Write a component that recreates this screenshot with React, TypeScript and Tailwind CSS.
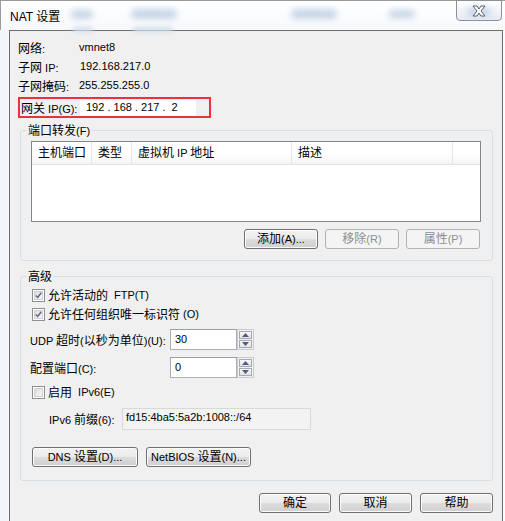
import React from 'react';

// Splits a label into CJK and Latin runs, Windows dialogs render CJK a touch larger
function Txt({ s }: { s: string }) {
  const parts = s.split(/([\u3400-\u9fff]+)/);
  return (
    <>
      {parts.map((p, i) =>
        p === '' ? null : /[\u3400-\u9fff]/.test(p) ? (
          <span key={i} className="text-[12px]">
            {p}
          </span>
        ) : (
          <span key={i} className="text-[11px] whitespace-pre">
            {p}
          </span>
        )
      )}
    </>
  );
}

function Button({ label, width, disabled }: { label: string; width: string; disabled?: boolean }) {
  return (
    <div
      className={`${width} h-[20px] flex items-center justify-center rounded-[3px] border ${
        disabled
          ? 'border-[#adb2b5] bg-[#f4f4f4] text-[#8d8d8d]'
          : 'border-[#707070] bg-[linear-gradient(#f2f2f2_0%,#ebebeb_50%,#dddddd_50%,#cfcfcf_100%)] shadow-[inset_0_0_0_1px_#fbfbfb] text-black'
      }`}
    >
      <Txt s={label} />
    </div>
  );
}

function Checkbox({ checked }: { checked?: boolean }) {
  return (
    <div className="w-[13px] h-[13px] border border-[#8e8f8f] bg-white p-[1px]">
      <div className="w-full h-full bg-[linear-gradient(135deg,#dcdcdc,#f7f7f7)] border border-[#d0d0d0] flex items-center justify-center">
        {checked && (
          <svg width="9" height="9" viewBox="0 0 9 9">
            <path d="M1 4.5 L3.5 7 L8 1" fill="none" stroke="#56648a" strokeWidth="1.8" />
          </svg>
        )}
      </div>
    </div>
  );
}

function Spinner() {
  return (
    <div className="w-[17px] h-[21px] flex flex-col gap-[1px] border border-[#c9cbd0] bg-[#f0f0f0] p-[1px]">
      {['up', 'down'].map((d) => (
        <div
          key={d}
          className="flex-1 flex items-center justify-center border border-[#a7a9ad] bg-[linear-gradient(#f7f7f7,#e3e3e3)]"
        >
          <svg width="7" height="4" viewBox="0 0 7 4">
            <path d={d === 'up' ? 'M0 4 L3.5 0 L7 4 Z' : 'M0 0 L3.5 4 L7 0 Z'} fill="#4c5c8c" />
          </svg>
        </div>
      ))}
    </div>
  );
}

function Group({ title, className, children }: { title: string; className: string; children: React.ReactNode }) {
  return (
    <div className={`relative ml-[2px] w-[473px] rounded-[3px] border border-[#d5dfe5] ${className}`}>
      <span className="absolute left-[6px] top-[-8px] bg-[#f0f0f0] px-[1px] leading-[14px]">
        <Txt s={title} />
      </span>
      {children}
    </div>
  );
}

export default function App() {
  const columns = [
    { name: '主机端口', w: 'w-[60px]' },
    { name: '类型', w: 'w-[40px]' },
    { name: '虚拟机 IP 地址', w: 'w-[160px]' },
    { name: '描述', w: 'w-[161px]' },
  ];

  return (
    <div className="relative w-[505px] h-[521px] overflow-hidden bg-[linear-gradient(90deg,#f3f6f9,#fbfcfd)] text-black leading-none font-['Liberation_Sans','Noto_Sans_CJK_SC',sans-serif]">
      {/* Title bar */}
      <div className="relative h-[30px] border-t border-l border-[#9b9b9b] bg-[linear-gradient(#ffffff,#f6f9fc)] flex items-center pl-[9px]">
        <div className="absolute left-[70px] top-[9px] w-[22px] h-[9px] rounded-full bg-[#c6d5e6] blur-[3px]" />
        <div className="absolute left-[130px] top-[8px] w-[46px] h-[10px] rounded-full bg-[#c6d5e6] blur-[3px]" />
        <div className="absolute left-[290px] top-[8px] w-[46px] h-[10px] rounded-full bg-[#c6d5e6] blur-[3px]" />
        <div className="absolute left-[388px] top-[9px] w-[26px] h-[8px] rounded-full bg-[#c6d5e6] blur-[3px]" />
        <div className="absolute left-[72px] top-[26px] w-[20px] h-[5px] rounded-full bg-[#d2dfec] blur-[2px]" />
        <div className="absolute left-[132px] top-[26px] w-[40px] h-[5px] rounded-full bg-[#d2dfec] blur-[2px]" />
        <span className="relative text-[12px] pt-[3px]">NAT 设置</span>
        <div className="absolute right-[3px] top-[-1px] w-[46px] h-[21px] rounded-b-[4px] border border-[#8c8f94] bg-[linear-gradient(#ffffff,#e3ebf3)] flex items-center justify-center">
          <div className="absolute left-[10px] top-[7px] w-[24px] h-[8px] rounded-full bg-[#c6d5e6] blur-[3px]" />
          <svg className="relative" width="16" height="12" viewBox="0 0 16 12">
            <path
              d="M2 1 L6 1 L8 4 L10 1 L14 1 L10 6 L14 11 L10 11 L8 8 L6 11 L2 11 L6 6 Z"
              fill="#ffffff"
              stroke="#5a5f66"
              strokeWidth="1"
              strokeLinejoin="round"
            />
          </svg>
        </div>
      </div>

      {/* Client area */}
      <div className="ml-[9px] w-[494px] h-[492px] border-l border-t border-r border-[#6e6e6e] bg-[#f0f0f0] pl-[8px] pt-[7px]">
        <div className="flex h-[19px] items-center">
          <span className="w-[61px]"><Txt s="网络:" /></span>
          <Txt s="vmnet8" />
        </div>
        <div className="flex h-[19px] items-center">
          <span className="w-[62px]"><Txt s="子网 IP:" /></span>
          <Txt s="192.168.217.0" />
        </div>
        <div className="flex h-[19px] items-center">
          <span className="w-[61px]"><Txt s="子网掩码:" /></span>
          <Txt s="255.255.255.0" />
        </div>

        {/* Gateway, highlighted */}
        <div className="mt-[2px] w-[193px] h-[21px] border-2 border-[#e8333b] flex items-center pl-[1px]">
          <span className="w-[59px]"><Txt s="网关 IP(G):" /></span>
          <div className="w-[116px] h-[16px] bg-white flex items-center pl-[6px]">
            <Txt s="192 . 168 . 217 .  2" />
          </div>
        </div>

        {/* Port forwarding */}
        <Group title="端口转发(F)" className="mt-[12px] h-[131px] pt-[10px] pl-[10px]">
          <div className="w-[450px] h-[81px] border border-[#828790] bg-white">
            <div className="flex h-[23px] border-b border-[#e5e5e5] bg-[linear-gradient(#ffffff_0%,#ffffff_55%,#f3f4f6_100%)]">
              {columns.map((c) => (
                <div key={c.name} className={`${c.w} flex items-center pl-[6px] border-r border-[#e3e5e8]`}>
                  <Txt s={c.name} />
                </div>
              ))}
            </div>
          </div>
          <div className="mt-[7px] flex justify-end gap-[7px] pr-[1px] w-[450px]">
            <Button label="添加(A)..." width="w-[74px]" />
            <Button label="移除(R)" width="w-[74px]" disabled />
            <Button label="属性(P)" width="w-[74px]" disabled />
          </div>
        </Group>

        {/* Advanced */}
        <Group title="高级" className="mt-[15px] h-[205px] pt-[9px] pl-[9px]">
          <div className="flex h-[19px] items-center gap-[3px] pl-[2px]">
            <Checkbox checked />
            <Txt s="允许活动的 FTP(T)" />
          </div>
          <div className="flex h-[19px] items-center gap-[3px] pl-[2px]">
            <Checkbox checked />
            <Txt s="允许任何组织唯一标识符(O)" />
          </div>
          <div className="mt-[5px] flex items-center">
            <span className="w-[140px]"><Txt s="UDP 超时(以秒为单位)(U):" /></span>
            <div className="w-[67px] h-[21px] border border-[#abadb3] border-t-[#999da6] bg-white flex items-center pl-[4px]">
              <Txt s="30" />
            </div>
            <Spinner />
          </div>
          <div className="mt-[7px] flex items-center">
            <span className="w-[140px]"><Txt s="配置端口(C):" /></span>
            <div className="w-[67px] h-[21px] border border-[#abadb3] border-t-[#999da6] bg-white flex items-center pl-[4px]">
              <Txt s="0" />
            </div>
            <Spinner />
          </div>
          <div className="mt-[5px] flex h-[19px] items-center gap-[3px] pl-[2px]">
            <Checkbox />
            <Txt s="启用 IPv6(E)" />
          </div>
          <div className="mt-[6px] flex items-center pl-[19px]">
            <span className="w-[73px]"><Txt s="IPv6 前缀(6):" /></span>
            <div className="w-[189px] h-[22px] border border-[#d9d9d9] bg-[#f3f3f3] flex items-start pt-[3px] pl-[3px]">
              <Txt s="fd15:4ba5:5a2b:1008::/64" />
            </div>
          </div>
          <div className="mt-[17px] flex gap-[8px] pl-[2px]">
            <Button label="DNS 设置(D)..." width="w-[106px]" />
            <Button label="NetBIOS 设置(N)..." width="w-[105px]" />
          </div>
        </Group>

        <div className="mt-[12px] flex justify-end gap-[8px] pr-[9px]">
          <Button label="确定" width="w-[72px]" />
          <Button label="取消" width="w-[73px]" />
          <Button label="帮助" width="w-[73px]" />
        </div>
      </div>
    </div>
  );
}
